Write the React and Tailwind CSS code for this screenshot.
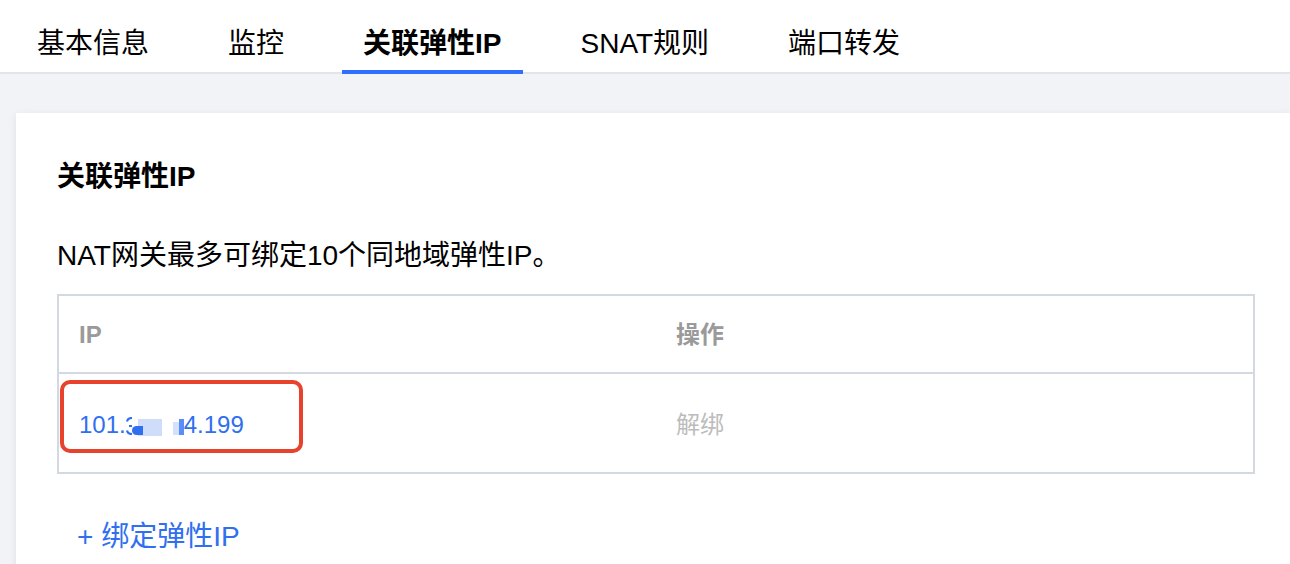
import React, { useState } from 'react';

const FONT = { fontFamily: '"Liberation Sans", "Noto Sans CJK SC", sans-serif' };

const TABS = ['基本信息', '监控', '关联弹性IP', 'SNAT规则', '端口转发'];

// 被遮挡的IP中间段
const MaskedIp = () => (
    <span className="inline-flex items-center text-[24px] leading-[24px] text-[#2f6ff0]">
        <span>101.</span>
        <span className="relative inline-block w-[58px] h-[24px]">
            <svg className="absolute left-0 top-[4px]" width="8" height="18" viewBox="0 0 8 18">
                <path d="M1 4.5 C1.5 2 3.5 1 6 1 M3 9 H6 M1 13.5 C1.5 16 3.5 17 6 17" stroke="#2f6ff0" strokeWidth="2.2" fill="none" />
            </svg>
            <span className="absolute left-[12px] top-[6px] w-[24px] h-[17px] bg-[#cfdcfa]" />
            <span className="absolute left-[6px] top-[13px] w-[11px] h-[9px] rounded-l-full bg-[#2f6ff0]" />
            <span className="absolute left-[47px] top-[9px] w-[6px] h-[13px] bg-[#d4e1fb]" />
            <span className="absolute left-[53px] top-[6px] w-[5px] h-[16px] bg-[#5a8df5]" />
        </span>
        <span>4.199</span>
    </span>
);

const App = () => {
    const [activeTab, setActiveTab] = useState(2);

    return (
        <div className="w-[1290px] h-[564px] overflow-hidden bg-[#f2f3f7]" style={FONT}>
            {/* --- TABS --- */}
            <div className="flex bg-white border-b-2 border-[#e3e4ea] pl-[16px]">
                {TABS.map((tab, i) => (
                    <button
                        key={tab}
                        onClick={() => setActiveTab(i)}
                        className={`relative h-[72px] pt-[16px] px-[21px] mr-[37px] flex items-center text-[28px] leading-[40px] text-black ${
                            activeTab === i ? 'font-bold' : 'font-normal'
                        }`}
                    >
                        {tab}
                        {activeTab === i && (
                            <span className="absolute left-0 right-0 -bottom-[2px] h-[4px] bg-[#2f6fff]" />
                        )}
                    </button>
                ))}
            </div>

            {/* --- CARD --- */}
            <div className="mt-[39px] ml-[16px] bg-white shadow-[0_2px_8px_rgba(0,0,0,0.08)] pt-[44px] pl-[41px] pr-[35px] pb-[40px]">
                <h2 className="text-[28px] leading-[40px] font-bold text-black">关联弹性IP</h2>
                <p className="mt-[39px] text-[28px] leading-[40px] text-black">NAT网关最多可绑定10个同地域弹性IP。</p>

                <div className="mt-[18px] border-2 border-[#d4d8e1]">
                    <div className="grid grid-cols-2 h-[78px] border-b-2 border-[#d4d8e1] items-center text-[24px] font-bold text-[#9a9a9a]">
                        <div className="pl-[20px] pt-[2px]">IP</div>
                        <div className="pl-[20px] pt-[2px]">操作</div>
                    </div>
                    <div className="grid grid-cols-2 h-[98px] items-center text-[24px]">
                        <div className="relative h-full flex items-center pl-[20px] pt-[4px]">
                            <MaskedIp />
                            <span className="absolute left-[1px] top-[6px] w-[243px] h-[73px] border-4 border-[#e8412c] rounded-[10px]" />
                        </div>
                        <div className="pl-[20px] pt-[4px] text-[#bcbcbc]">解绑</div>
                    </div>
                </div>

                <button className="mt-[43px] ml-[20px] text-[28px] leading-[40px] text-[#2f6ff0]">+ 绑定弹性IP</button>
            </div>
        </div>
    );
};

export default App;
